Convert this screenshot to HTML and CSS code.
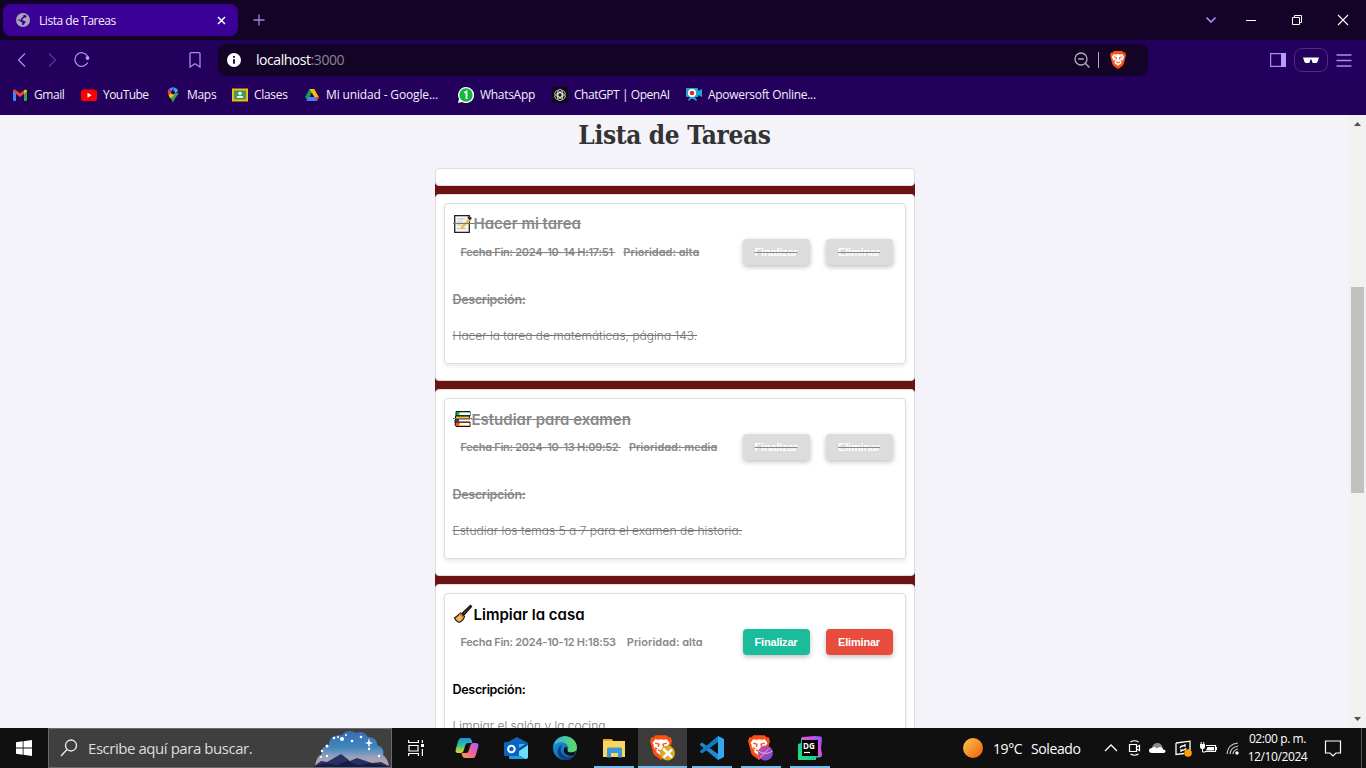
FILE: index.html
```html
<!DOCTYPE html>
<html lang="es">
<head>
<meta charset="utf-8">
<title>Lista de Tareas</title>
<link rel="stylesheet" href="styles.css">
</head>
<body>
<svg width="0" height="0" class="defs">
  <defs>
    <linearGradient id="edgeA" x1="0" y1="0" x2="1" y2="0"><stop offset="0" stop-color="#2fb4e8"/><stop offset="1" stop-color="#62dc5b"/></linearGradient>
    <linearGradient id="edgeB" x1="0" y1="0" x2="1" y2="1"><stop offset="0" stop-color="#1b9de0"/><stop offset="1" stop-color="#0f4f9e"/></linearGradient>
    <linearGradient id="copA" x1="0" y1="0" x2="0" y2="1"><stop offset="0" stop-color="#1a8df0"/><stop offset=".5" stop-color="#35c48b"/><stop offset="1" stop-color="#f3cf2a"/></linearGradient>
    <linearGradient id="copB" x1="1" y1="0" x2="0" y2="1"><stop offset="0" stop-color="#a55df5"/><stop offset=".5" stop-color="#f0629c"/><stop offset="1" stop-color="#fba04a"/></linearGradient>
    <linearGradient id="dgA" x1="0" y1="1" x2="1" y2="0"><stop offset="0" stop-color="#1fe07c"/><stop offset=".45" stop-color="#22c99a"/><stop offset=".6" stop-color="#f04be0"/><stop offset="1" stop-color="#7a5cff"/></linearGradient>
    <linearGradient id="sky" x1="0" y1="0" x2="0" y2="1"><stop offset="0" stop-color="#3a6ab4"/><stop offset=".45" stop-color="#3f86bd"/><stop offset=".7" stop-color="#8f9fc0"/><stop offset="1" stop-color="#e8a294"/></linearGradient>
    <linearGradient id="ball" x1="0" y1="0" x2="1" y2="1"><stop offset="0" stop-color="#e04a8c"/><stop offset="1" stop-color="#5b4be0"/></linearGradient>
    <symbol id="lion" viewBox="0 0 16 18">
      <path fill="#fb4f14" d="M4 0h8l1.500 1.600 1.600-.1.900 3-.6 2-1.700 6.500c-.3 1-1 1.700-2 2.400L8 18l-3.700-2.600c-1-.7-1.700-1.400-2-2.400L.6 6.500 0 4.500l.9-3 1.600.1z"/>
      <path fill="#fff" d="M3.800 3l2.400.4L8 3l1.800.4 2.400-.4 2 2.700-1 1.700.2 1.400-2.300 2.300.4 1.200L8 14.800 4.500 12.300l.4-1.200-2.300-2.300.2-1.400-1-1.700z"/>
      <path fill="none" stroke="#fb4f14" stroke-width="1" d="M3.800 5.800l2.700.8-.4 2M12.200 5.800l-2.700.8.4 2M6 10.800l2 1.100 2-1.100M3.500 9l1.800 1M12.500 9l-1.800 1"/>
    </symbol>
  </defs>
</svg>

<header class="browser">
  <div class="tabs">
    <div class="tab">
      <svg width="14" height="14" viewBox="0 0 14 14"><circle cx="7" cy="7" r="7" fill="#a9a5b5"/><path fill="#3b0095" d="M7.500 1.800l3.500 1-1 1.500L7.800 5 6 7l2 .8L10 9l-1.500 1.500L7 12.500l-1-.8.300-2L4 8 1.700 7l.2 2 2 2.700Q1.300 9.800 1.500 6.500L5 6.800 5.300 5l2-1.200z"/></svg>
      <span class="tab-title">Lista de Tareas</span>
      <svg width="9" height="9" viewBox="0 0 9 9"><path d="M1 1l7 7M8 1l-7 7" stroke="#fff" stroke-width="1.500"/></svg>
    </div>
    <svg class="new-tab" width="12" height="12" viewBox="0 0 12 12"><path d="M6 .5v11M.5 6h11" stroke="#9d86d8" stroke-width="1.300"/></svg>
    <div class="window-controls">
      <svg width="12" height="12" viewBox="0 0 12 12"><path d="M1.500 3.500L6 8l4.500-4.500" fill="none" stroke="#a78bfa" stroke-width="1.700"/></svg>
      <svg width="12" height="12" viewBox="0 0 12 12"><path d="M1 6.500h10" stroke="#fff"/></svg>
      <svg width="12" height="12" viewBox="0 0 12 12"><path d="M1.500 3.500h7v7h-7zM3.500 3.500v-2h7v7h-2" fill="none" stroke="#fff"/></svg>
      <svg width="12" height="12" viewBox="0 0 12 12"><path d="M1 1l10 10M11 1L1 11" stroke="#fff" stroke-width="1.100"/></svg>
    </div>
  </div>

  <div class="toolbar">
    <div class="nav">
      <svg width="16" height="16" viewBox="0 0 16 16"><path d="M11 1.500L4.500 8l6.500 6.500" fill="none" stroke="#a78bfa" stroke-width="1.300"/></svg>
      <svg width="16" height="16" viewBox="0 0 16 16"><path d="M5 1.500L11.500 8 5 14.500" fill="none" stroke="#563399" stroke-width="1.300"/></svg>
      <svg width="16" height="16" viewBox="0 0 16 16"><path d="M13.800 10.500A6.800 6.800 0 1 1 13.500 4" fill="none" stroke="#a78bfa" stroke-width="1.300"/><circle cx="13.500" cy="6" r="1.900" fill="#b79dff"/></svg>
    </div>
    <svg class="save" width="12" height="16" viewBox="0 0 12 16"><path d="M1 2q0-1.300 1.300-1.300h7.400Q11 .7 11 2v13l-5-3.300L1 15z" fill="none" stroke="#a78bfa" stroke-width="1.300"/></svg>
    <div class="address">
      <svg width="14" height="14" viewBox="0 0 14 14"><circle cx="7" cy="7" r="7" fill="#fff"/><path d="M7 6.200v4.600M7 3v1.800" stroke="#2a1048" stroke-width="2"/></svg>
      <span class="url">localhost<span class="port">:3000</span></span>
      <svg width="16" height="16" viewBox="0 0 16 16"><circle cx="7" cy="7" r="6" fill="none" stroke="#b3afba" stroke-width="1.300"/><path d="M4.200 7h5.600M11.200 11.200L15.500 15.500" stroke="#b3afba" stroke-width="1.400"/></svg>
      <i class="divider"></i>
      <svg width="16" height="18"><use href="#lion"/></svg>
    </div>
    <div class="tools">
      <svg width="16" height="14" viewBox="0 0 16 14"><path d="M.6.600h14.800v12.800H.6z" fill="none" stroke="#a78bfa" stroke-width="1.200"/><path d="M11 0h5v14h-5z" fill="#b79dff"/></svg>
      <div class="private"><svg width="16" height="7" viewBox="0 0 16 7"><path fill="#fff" d="M0 .500h16l-.5 1.500-1 3Q14 6 13 6h-2.500Q9.500 6 9.200 5l-.7-2.500h-1L6.800 5Q6.500 6 5.500 6H3Q2 6 1.500 5z"/></svg></div>
      <svg width="16" height="13" viewBox="0 0 16 13"><path d="M.5 1h15M.5 6.500h15M.5 12h15" stroke="#a78bfa" stroke-width="1.300"/></svg>
    </div>
  </div>

  <nav class="bookmarks">
    <a><svg width="16" height="16" viewBox="0 0 16 16"><path fill="#4285f4" d="M1 3.500l3 2.200V14H2q-1 0-1-1z"/><path fill="#34a853" d="M15 3.500l-3 2.200V14h2q1 0 1-1z"/><path fill="#ea4335" d="M1 4q.3-2.300 2.500-1.200L8 6.300l4.500-3.500v3.800L8 10 4 7V6z"/><path fill="#fbbc04" d="M12 3.200Q15 1.500 15 4.500L12 7z"/></svg><span class="tight">Gmail</span></a>
    <a><svg width="16" height="16" viewBox="0 0 16 16"><rect y="2.500" width="16" height="11.500" rx="2.800" fill="#f00"/><path d="M6.500 5.800L10.700 8.200 6.500 10.700z" fill="#fff"/></svg><span class="tighter">YouTube</span></a>
    <a><svg width="16" height="16" viewBox="0 0 16 16"><path fill="#34a853" d="M13.400 5.500c0 3.500-4 5-4.700 9q-.7 1.500-1.300 0C7 12.300 5.200 11 4 9z"/><path fill="#fbbc04" d="M3.500 8.200L7 4l3 3-4.500 4.500z"/><path fill="#ea4335" d="M3.700 2.500L7 5 3.500 8Q1.800 5 3.700 2.500z"/><path fill="#4285f4" d="M3.700 2.500Q6-.3 9.500.5L6.300 4.600z"/><path fill="#4da3f7" d="M9.500.5q2.700.7 3.600 3.300L10 7 8 4z"/><circle cx="8" cy="5.400" r="1.900" fill="#22005c"/></svg><span>Maps</span></a>
    <a><svg width="16" height="16" viewBox="0 0 16 16"><path fill="#f4b91e" d="M0 1.500h16v13H0z"/><path fill="#3f9b55" d="M2 3.500h12v9H2z"/><circle cx="8" cy="6.300" r="1.600" fill="#fff"/><path d="M4.500 10.800q0-2 3.500-2t3.500 2z" fill="#fff"/></svg><span>Clases</span></a>
    <a><svg width="16" height="16" viewBox="0 0 16 16"><path fill="#159957" d="M5.500 2h4L4 14 1 10z"/><path fill="#fbbc04" d="M5.500 2h4.800l4.700 8.500h-4.500z"/><path fill="#4285f4" d="M4 10h11l-2.300 4H2.500z"/><path fill="#ea4335" d="M11 10h4l-2 3.500z"/><path fill="#22005c" d="M8 6.300l2 3.700H6z"/></svg><span class="loose">Mi unidad - Google...</span></a>
    <a><svg width="16" height="16" viewBox="0 0 16 16"><path fill="#fff" d="M8 0a8 8 0 1 1-3.800 15L0 16l1-4.200A8 8 0 0 1 8 0z"/><circle cx="8" cy="8" r="6.700" fill="#12b83f"/><path d="M6.300 5.800L8.500 4.500V12" fill="none" stroke="#fff" stroke-width="1.800"/></svg><span>WhatsApp</span></a>
    <a><svg width="16" height="16" viewBox="0 0 16 16"><rect width="16" height="16" rx="3.500" fill="#0c0c0c"/><g fill="none" stroke="#ddd" stroke-width=".8"><rect x="5.500" y="2.300" width="5" height="8" rx="2.500"/><rect x="5.500" y="2.300" width="5" height="8" rx="2.500" transform="rotate(60 8 8)"/><rect x="5.500" y="2.300" width="5" height="8" rx="2.500" transform="rotate(120 8 8)"/><rect x="5.500" y="2.300" width="5" height="8" rx="2.500" transform="rotate(180 8 8)"/><rect x="5.500" y="2.300" width="5" height="8" rx="2.500" transform="rotate(240 8 8)"/><rect x="5.500" y="2.300" width="5" height="8" rx="2.500" transform="rotate(300 8 8)"/></g></svg><span class="tight">ChatGPT | OpenAI</span></a>
    <a><svg width="16" height="16" viewBox="0 0 16 16"><path fill="#22a7cc" d="M0 2q0-1 1-1h10q1 0 1 1v2l4-2v8l-4-2v2H9l2 3-1 1-2.500-2H5L3 14l-1-1 2-3H1q-1 0-1-1z"/><circle cx="6" cy="6" r="4" fill="#fff"/><circle cx="6" cy="6" r="2.300" fill="#e8281e"/></svg><span>Apowersoft Online...</span></a>
  </nav>
</header>

<main class="viewport">
  <div class="page">
    <h1>Lista de Tareas</h1>
    <ul class="tasks">
      <li class="task empty"></li>
      <li class="task done">
        <article class="card">
          <h2><svg width="21" height="20" viewBox="0 0 21 20"><path d="M1.700 1.700h14.600v16.600H1.700z" fill="#f4f4f4" stroke="#222" stroke-width="1.300"/><path d="M4 5h8M4 8h6M4 11h5M4 14.500h9" stroke="#c5c5c5"/><path d="M7 15l1.300-3L16 4l2 1.800L10.300 14z" fill="#f3c13c"/><path d="M14.500 2.800l2.500-.3L19 4l-1.700 2.500-2.500-2z" fill="#333"/><path d="M0 9.500h21" stroke="#777"/></svg><span>Hacer mi tarea</span></h2>
          <div class="row"><span class="date">Fecha Fin: 2024-10-14 H:17:51&nbsp;</span><span class="priority">Prioridad: alta</span><button>Finalizar</button><button>Eliminar</button></div>
          <h3>Descripción:</h3>
          <p>Hacer la tarea de matemáticas, página 143.</p>
        </article>
      </li>
      <li class="task done">
        <article class="card">
          <h2><svg width="19" height="20" viewBox="0 0 19 20"><path d="M3 2.500h14v4.500H3z" fill="#19b53c" stroke="#111"/><path d="M7 3.500h10v2.500H6z" fill="#fff"/><path d="M2.500 7h14v4h-14z" fill="#f5bf3a" stroke="#111"/><path d="M2 11h14v3H2z" fill="#2185d0" stroke="#111"/><path d="M6 10.500h11v2.500H6z" fill="#fff"/><path d="M3 13h14v4.500H3q-2-2 0-4.500z" fill="#ee5a16" stroke="#111"/><path d="M7 14h9.500v2.500H6z" fill="#fff"/><path d="M0 9.500h19" stroke="#777"/></svg><span>Estudiar para examen</span></h2>
          <div class="row"><span class="date">Fecha Fin: 2024-10-13 H:09:52&nbsp;</span><span class="priority">Prioridad: media</span><button>Finalizar</button><button>Eliminar</button></div>
          <h3>Descripción:</h3>
          <p>Estudiar los temas 5 a 7 para el examen de historia.</p>
        </article>
      </li>
      <li class="task">
        <article class="card">
          <h2><svg width="21" height="20" viewBox="0 0 21 20"><path d="M9.500 9L17.500 1.500l1 1L11 11z" fill="#7a4a2b" stroke="#111" stroke-width="1.300"/><path d="M7.500 9l4 3.500Q10 17 6 18.500q-3-1-4.500-4.500Q4 12.500 7.500 9z" fill="#f2b552" stroke="#222" stroke-width="1.200"/><path d="M6.200 9.500l4 4" stroke="#e8743c" stroke-width="1.500"/></svg><span>Limpiar la casa</span></h2>
          <div class="row"><span class="date pending">Fecha Fin: 2024-10-12 H:18:53</span><span class="priority">Prioridad: alta</span><button class="finish">Finalizar</button><button class="delete">Eliminar</button></div>
          <h3>Descripción:</h3>
          <p>Limpiar el salón y la cocina.</p>
        </article>
      </li>
    </ul>
  </div>
  <aside class="scrollbar">
    <svg width="17" height="17" viewBox="0 0 17 17"><path d="M5 11l3.500-4 3.500 4z" fill="#505050"/></svg>
    <i class="thumb"></i>
    <svg width="17" height="17" viewBox="0 0 17 17"><path d="M5 6l3.500 4L12 6z" fill="#505050"/></svg>
  </aside>
</main>

<footer class="taskbar">
  <div class="start"><svg width="16" height="16" viewBox="0 0 16 16"><path fill="#fff" d="M0 2.300l6.700-1v6.200H0zM7.500 1.200L16 0v7.500H7.500zM0 8.400h6.700v6.300L0 13.700zM7.500 8.400H16V16l-8.500-1.200z"/></svg></div>
  <div class="search">
    <svg width="18" height="18" viewBox="0 0 18 18"><circle cx="11" cy="6.500" r="5.500" fill="none" stroke="#eee" stroke-width="1.300"/><path d="M7 10.500L1 17" stroke="#eee" stroke-width="1.300"/></svg>
    <span class="hint">Escribe aquí para buscar.</span>
    <svg width="78" height="38" viewBox="0 0 78 38"><path fill="url(#sky)" d="M2 38Q3 27 9 25q-2-7 7-9 0-11 13-10Q34-1 43 4q8-3 12 4 9 0 9 8 8 3 6 10 5 4 6 12z"/><path fill="#263061" d="M0 38l8-6 6 1 14-8 9 7 7-3 15 5 9-1 10 5z"/><path fill="#161c49" d="M0 38l12-4 12 2 10-4 12 4 12-2 20 4z"/><g fill="#fff"><circle cx="21" cy="9" r="1.200"/><circle cx="29" cy="10" r="2"/><circle cx="25" cy="8" r="1"/><circle cx="33" cy="6" r="1"/><circle cx="39" cy="12" r="1.300"/><circle cx="48" cy="8" r="1.300"/><circle cx="14" cy="17" r="1.500"/><circle cx="9" cy="22" r="1.200"/><circle cx="14" cy="27" r="1.200"/><circle cx="8" cy="28" r="1"/><circle cx="56" cy="20" r="1.200"/><circle cx="66" cy="27" r="1.200"/><path d="M56 9l1 4 3 1-3 1-1 4-1-4-3-1 3-1z"/></g></svg>
  </div>
  <div class="apps">
    <div class="app"><svg width="16" height="16" viewBox="0 0 16 16"><path d="M0 2.500h11M0 13.500h11M1 5.500h9v5.500H1zM.6 0v3M10.400 0v3M.6 13v3M10.400 13v3M14.400 0v3M14.400 9v7" fill="none" stroke="#fff" stroke-width="1.200"/><path d="M13 4h3v3h-3z" fill="#fff"/></svg></div>
    <div class="app"><svg width="24" height="22" viewBox="0 0 24 22"><path fill="url(#copA)" d="M6 1h8q2 0 2.600 2L17.500 6H13q-2 0-2.600 2L8.500 14q-.7 2-2.700 2H3Q0 16 .7 12.500L3.300 3.500Q4 1 6 1z"/><path fill="url(#copB)" d="M18 21h-8q-2 0-2.600-2L6.500 16H11q2 0 2.600-2L15.500 8q.7-2 2.700-2H21q3 0 2.300 3.500l-2.600 9Q20 21 18 21z"/></svg></div>
    <div class="app"><svg width="24" height="22" viewBox="0 0 24 22"><path fill="#1066b5" d="M4 5l9-5 11 6v10H4z"/><path fill="#35b8f1" d="M12 7h11v12H12z"/><path fill="#0f4f9e" d="M15 11l8-5v3l-8 5z"/><path fill="#6fdcfb" d="M24 8v12q0 2-2 2H7q-2 0-2-1l12-8z"/><path fill="#1b9be8" d="M5 13l17 9H7q-2 0-2-2z"/><rect y="5" width="15" height="14" rx="1.500" fill="#0a63c4"/><circle cx="7.400" cy="12" r="3.300" fill="none" stroke="#fff" stroke-width="2"/></svg></div>
    <div class="app"><svg width="24" height="24" viewBox="0 0 24 24"><circle cx="12" cy="12" r="12" fill="url(#edgeB)"/><path fill="url(#edgeA)" d="M.3 10A12 12 0 0 1 24 11q0 5.500-6 5.500-4 0-3.500-2.500 1.500-2 .3-4Q12 5 6 6.500 2 7.500.3 10z"/><path fill="#0c3f86" d="M9 9q-3 5 .5 9.500 4 4.500 11.500 1.500-4 4.500-9.500 4Q3 21 5 13q1-3 4-4z"/><path fill="#101010" d="M14.500 14q-.5 2.500 3.500 2.500 3 0 5-1.800-.5 2-2.200 4.500-5 1.500-8.300-1.200-3-3-.8-6.500Q14.500 10 14.500 14z"/></svg></div>
    <div class="app open"><svg width="24" height="22" viewBox="0 0 24 22"><path fill="#e8a61c" d="M1 2h9l1.500 3H1z"/><path fill="#fcd55f" d="M1 4h22v16H1z"/><path fill="#3b97dc" d="M5 12q0-1.500 1.500-1.500h12Q20 10.500 20 12v8.500h-4V16H9v4.500H5z"/></svg></div>
    <div class="app open active"><svg width="26" height="26" viewBox="0 0 26 26"><svg width="22" height="25"><use href="#lion"/></svg><circle cx="17.500" cy="18" r="7.500" fill="#d5ad22"/><path d="M13 13.500l9 9M22 14.500l-8.500 8" stroke="#fff" stroke-width="2.500"/></svg></div>
    <div class="app open"><svg width="24" height="24" viewBox="0 0 24 24"><path fill="#2189d3" d="M0 8l2-1.500L18 18v6L0 9z"/><path fill="#147ac0" d="M0 16l2 1.500L18 6V0L0 15z"/><path fill="#35a7f2" d="M18 0l6 3v18l-6 3z"/></svg></div>
    <div class="app open"><svg width="26" height="26" viewBox="0 0 26 26"><svg width="22" height="25"><use href="#lion"/></svg><circle cx="17.500" cy="18" r="7.500" fill="url(#ball)"/><path d="M10.500 16q7 5 14 0M12 22.500l9-9" fill="none" stroke="#f5a8e0"/></svg></div>
    <div class="app open"><svg width="24" height="24" viewBox="0 0 24 24"><path fill="url(#dgA)" d="M0 8l3-1V3q0-2 2-2l12-1 6 .5q1 1 1 3l-1 9 1 6q0 3-3 3h-3v3H2q-2 0-2-2z"/><path fill="#000" d="M4 4h16v16H4z"/><text x="5" y="12.500" class="dg">DG</text><path d="M6 16.500h6" stroke="#fff" stroke-width="1.200"/></svg></div>
  </div>
  <div class="weather"><i class="sun"></i><span class="temp">19°C</span><span class="sky">Soleado</span></div>
  <div class="tray">
    <svg width="14" height="16" viewBox="0 0 14 16"><path d="M1 11l6-6 6 6" fill="none" stroke="#fff" stroke-width="1.300"/></svg>
    <svg width="14" height="16" viewBox="0 0 14 16"><path d="M2.500 4.500h7v7h-7zM9.500 7l3-1.500v5l-3-1.500M3.500 2Q7.500-.5 11.500 2M3.500 14q4 2.500 8 0" fill="none" stroke="#fff" stroke-width="1.200"/></svg>
    <svg width="17" height="16" viewBox="0 0 17 16"><path fill="#8c8c8c" d="M3 8q1-5 5.500-5 4 0 5 4.500l-7 3z"/><path fill="#fff" d="M3 13q-3 0-3-2.500T3 8q2-2 5 .5Q10 6 13 7.500q1 .5 1 2 3 .5 2.500 2.200Q16 13 14 13z"/></svg>
    <svg width="17" height="17" viewBox="0 0 17 17"><path d="M1 3l14-1.800v10M9 13.500L1 14.500V3" fill="none" stroke="#fff" stroke-width="1.300"/><path d="M5 8q1-3 5-2V4M11 8q-1 3-5 2v2" fill="none" stroke="#fff" stroke-width="1.300"/><circle cx="13" cy="13" r="3.800" fill="#ff9d0a"/></svg>
    <svg width="17" height="16" viewBox="0 0 17 16"><path d="M6 5.500h9.500v6H5" fill="none" stroke="#fff" stroke-width="1.200"/><path d="M7.500 7H14v3.500H6zM0 4h5v3q0 2-2 2H2Q0 9 0 7zM16 7h1v3h-1z" fill="#fff"/><path d="M1.200 2v2M3.800 2v2M2.500 8v4h3" fill="none" stroke="#fff"/></svg>
    <svg width="13" height="16" viewBox="0 0 13 16"><g fill="none" stroke="#ccc" stroke-width="1.200"><path d="M1 14Q2 4 12 3M4 14q.5-6.500 8-8M7 14q.5-4 5-5"/></g><circle cx="11" cy="13" r="1.700" fill="#fff"/></svg>
  </div>
  <div class="clock"><span>02:00 p. m.</span><span>12/10/2024</span></div>
  <svg class="notice" width="18" height="18" viewBox="0 0 18 18"><path d="M1.500 2h15v12H12l-3 3-3-3H1.500z" fill="none" stroke="#fff" stroke-width="1.200"/></svg>
  <i class="peek"></i>
</footer>
</body>
</html>
```
FILE: styles.css
```css
* { box-sizing: border-box; }
body {
  margin: 0;
  width: 1366px;
  height: 768px;
  overflow: hidden;
  display: flex;
  flex-direction: column;
  font-family: "Open Sans", "Noto Sans", sans-serif;
  background: #f4f3f9;
}
.defs { position: absolute; }
svg { display: block; flex: none; }

/* browser frame */
.browser { height: 115px; flex: none; background: #22005c; color: #f3effc; }
.tabs { height: 40px; background: #130327; display: flex; align-items: center; }
.tab {
  width: 235px; height: 32px; margin-left: 3px; padding: 0 12px 0 13px;
  display: flex; align-items: center;
  background: #3b0095; border-radius: 8px;
}
.tab-title { flex: 1; margin-left: 9px; font-size: 12px; letter-spacing: -0.45px; }
.new-tab { margin-left: 15px; }
.window-controls { margin-left: auto; padding-right: 17px; display: flex; gap: 34px; }
.window-controls svg:first-child { margin-right: -6px; }
.toolbar { height: 40px; display: flex; align-items: center; }
.nav { display: flex; gap: 14px; margin-left: 14px; }
.save { margin-left: 99px; }
.address {
  width: 930px; height: 32px; margin-left: 17px; padding: 0 22px 0 9px;
  display: flex; align-items: center;
  background: #130327; border-radius: 8px;
}
.url { flex: 1; margin: -2px 0 0 15px; font-size: 14px; letter-spacing: -0.45px; color: #fff; }
.port { color: #8a8393; }
.divider { width: 1px; height: 16px; margin: 0 11px 0 8px; background: #b3afba; }
.tools { display: flex; align-items: center; gap: 8px; margin-left: 122px; }
.private {
  width: 34px; height: 24px; display: flex; align-items: center; justify-content: center;
  border: 1px solid #4d2b8c; border-radius: 8px;
}
.bookmarks {
  height: 30px; padding-left: 12px; display: grid; align-items: center;
  grid-template-columns: 69px 84px 67px 72px 154px 94px 134px 150px;
  font-size: 12px; white-space: nowrap;
}
.bookmarks a { display: flex; align-items: center; gap: 6px; letter-spacing: -0.3px; }
.bookmarks span { margin-top: -2px; }
.bookmarks .tight { letter-spacing: -0.45px; }
.bookmarks .tighter { letter-spacing: -0.55px; }
.bookmarks .loose { letter-spacing: -0.15px; }

/* page */
.viewport { flex: 1; min-height: 0; display: flex; overflow: hidden; }
.page { flex: 1; display: flex; flex-direction: column; align-items: center; }
h1 {
  flex: none; margin: 0; height: 52.800px;
  font: bold 26px/41px "DejaVu Serif Condensed", "DejaVu Serif", serif;
  font-stretch: condensed; letter-spacing: -0.35px; color: #333;
}
.tasks {
  flex: none; width: 480px; margin: 0; padding: 0; list-style: none;
  display: flex; flex-direction: column; gap: 8px;
  background: linear-gradient(transparent 12px, #6b1313 12px);
  font-family: Inter, sans-serif; font-feature-settings: "cv11";
}
.task {
  height: 187.300px; flex: none; padding: 8px;
  background: #fff; border: 1px solid #ddd; border-radius: 4px;
}
.empty { height: 18px; }
.card {
  height: 161px; padding: 10.600px 8px 0;
  border: 1px solid #ddd; border-radius: 4px;
  box-shadow: 0 2px 4px rgba(0, 0, 0, .1);
}
.card h2 {
  margin: 0; height: 19px; display: flex; align-items: center;
  font-size: 15px; font-weight: 600; white-space: nowrap; color: #000;
}
.row { height: 26px; margin-top: 5.500px; padding-left: 8px; display: flex; align-items: center; }
.row span { font-size: 11px; font-weight: 600; color: #888; white-space: nowrap; }
.row .date { letter-spacing: -0.270px; }
.row .priority { flex: 1; margin-left: 8px; }
.row .pending { margin-right: 3px; }
.row button {
  width: 67px; height: 26px; padding: 0; margin-right: 16px;
  border: 0; border-radius: 4px; box-shadow: 0 2px 5px rgba(0, 0, 0, .25);
  font: bold 11px "Liberation Sans", sans-serif; letter-spacing: -0.2px; color: #fff; background: #dcdcdc;
}
.row button:last-child { margin-right: 4px; }
.row .finish { background: #1abc9c; }
.row .delete { background: #e74c3c; }
.card h3 { margin: 26px 0 0; font-size: 12.500px; line-height: 18px; font-weight: 600; letter-spacing: -0.3px; color: #000; }
.card p { margin: 18px 0 0; font-size: 12px; line-height: 18px; font-weight: 300; color: #777; white-space: nowrap; }
.done h2 span, .done h3, .done p, .done .row span { color: #888; text-decoration: line-through; }
.done p { color: #747474; }
.done h3 { width: max-content; }
.done button { text-decoration: line-through #888; }

.scrollbar { width: 17px; background: #f1f1f1; display: flex; flex-direction: column; align-items: center; }
.thumb { width: 13px; height: 206px; margin: 155px 0 auto; background: #c1c1c1; }

/* taskbar */
.taskbar { height: 40px; flex: none; display: flex; align-items: center; background: #101010; color: #fff; white-space: nowrap; }
.start { width: 48px; display: flex; justify-content: center; }
.search {
  width: 344px; height: 40px; padding-left: 11px; display: flex; align-items: center;
  background: #3f3f3f; border: 1px solid #6a6a6a;
}
.hint { flex: 1; margin-left: 10px; font-size: 15px; letter-spacing: -0.45px; color: #ddd; }
.apps { display: flex; align-items: center; height: 40px; margin-left: -1px; }
.app { width: 49px; height: 40px; display: flex; align-items: center; justify-content: center; background: linear-gradient(#76b9ed, #76b9ed) no-repeat center bottom / 0 2px; }
.app:nth-child(2) { margin-left: 2px; }
.open { background-size: 40px 2px; }
.active { background-color: #3b3b3b; background-size: 49px 2px; }
.dg { font: bold 8px "Open Sans", sans-serif; fill: #fff; }
.weather { display: flex; align-items: center; margin-left: 129px; font-size: 14px; }
.sun { width: 20px; height: 20px; border-radius: 50%; background: linear-gradient(135deg, #fbc54a, #ef5f0e); }
.temp { width: 29px; margin-left: 10px; letter-spacing: -0.4px; }
.sky { width: 50px; margin-left: 9px; letter-spacing: -0.4px; }
.tray { display: flex; align-items: center; gap: 8.500px; margin-left: 23px; }
.clock { width: 66px; margin-left: 6px; display: flex; flex-direction: column; align-items: center; font-size: 12px; line-height: 18px; letter-spacing: -0.4px; }
.notice { margin-left: 13px; }
.peek { width: 1px; height: 40px; margin-left: auto; margin-right: 4px; background: #555; }
```
